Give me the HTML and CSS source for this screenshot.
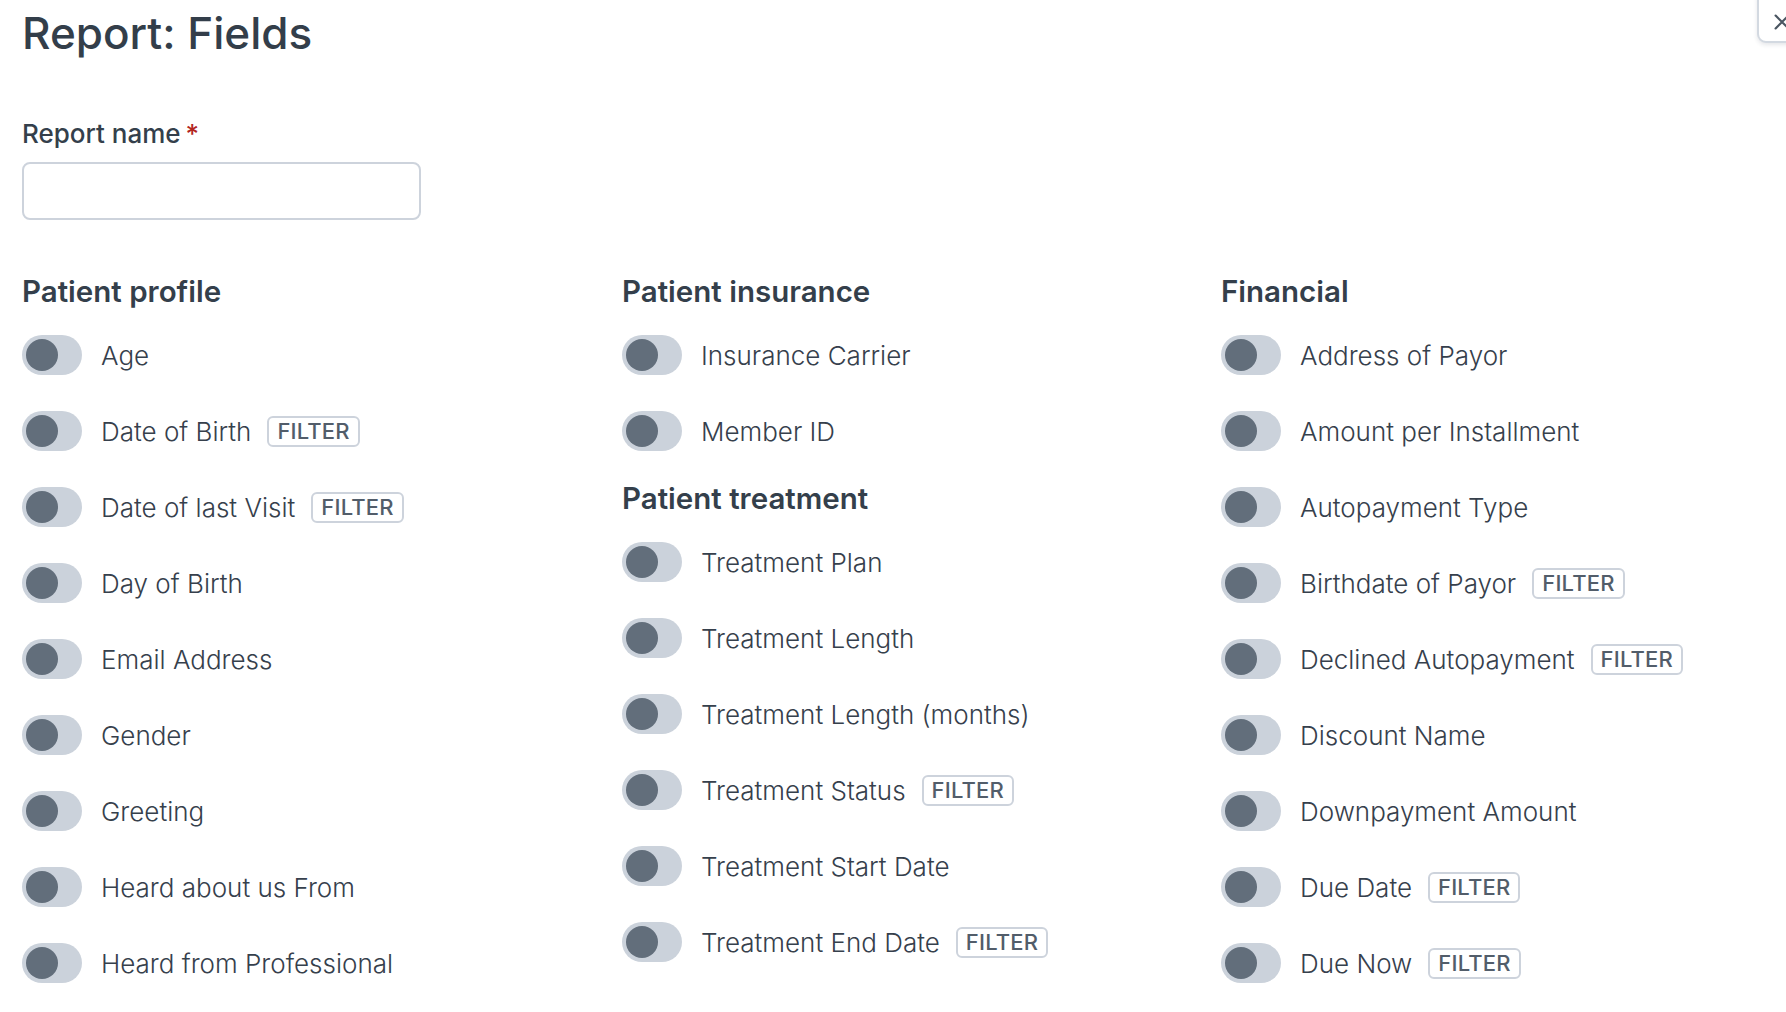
FILE: index.html
```html
<!DOCTYPE html>
<html lang="en">
<head>
<meta charset="utf-8">
<title>Report: Fields</title>
<link rel="stylesheet" href="styles.css">
</head>
<body>
<div class="page">
  <button class="close" aria-label="Close">
    <svg viewBox="0 0 24 24" width="22" height="22"><path d="M5 5 L19 19 M19 5 L5 19" stroke="#4a5561" stroke-width="2.4" stroke-linecap="round" fill="none"/></svg>
  </button>
  <h1 class="title">Report: Fields</h1>
  <div class="field">
    <label class="label">Report name<span class="req">*</span></label>
    <input class="input" type="text">
  </div>
  <div class="columns">
    <div class="col">
      <section class="group">
        <h2 class="group-title">Patient profile</h2>
        <ul class="list">
          <li class="item"><span class="toggle"><span class="knob"></span></span><span class="name">Age</span></li>
          <li class="item"><span class="toggle"><span class="knob"></span></span><span class="name">Date of Birth</span><span class="badge">FILTER</span></li>
          <li class="item"><span class="toggle"><span class="knob"></span></span><span class="name">Date of last Visit</span><span class="badge">FILTER</span></li>
          <li class="item"><span class="toggle"><span class="knob"></span></span><span class="name">Day of Birth</span></li>
          <li class="item"><span class="toggle"><span class="knob"></span></span><span class="name">Email Address</span></li>
          <li class="item"><span class="toggle"><span class="knob"></span></span><span class="name">Gender</span></li>
          <li class="item"><span class="toggle"><span class="knob"></span></span><span class="name">Greeting</span></li>
          <li class="item"><span class="toggle"><span class="knob"></span></span><span class="name">Heard about us From</span></li>
          <li class="item"><span class="toggle"><span class="knob"></span></span><span class="name">Heard from Professional</span></li>
        </ul>
      </section>
    </div>
    <div class="col">
      <section class="group">
        <h2 class="group-title">Patient insurance</h2>
        <ul class="list">
          <li class="item"><span class="toggle"><span class="knob"></span></span><span class="name">Insurance Carrier</span></li>
          <li class="item"><span class="toggle"><span class="knob"></span></span><span class="name">Member ID</span></li>
        </ul>
      </section>
      <section class="group">
        <h2 class="group-title">Patient treatment</h2>
        <ul class="list">
          <li class="item"><span class="toggle"><span class="knob"></span></span><span class="name">Treatment Plan</span></li>
          <li class="item"><span class="toggle"><span class="knob"></span></span><span class="name">Treatment Length</span></li>
          <li class="item"><span class="toggle"><span class="knob"></span></span><span class="name">Treatment Length (months)</span></li>
          <li class="item"><span class="toggle"><span class="knob"></span></span><span class="name">Treatment Status</span><span class="badge">FILTER</span></li>
          <li class="item"><span class="toggle"><span class="knob"></span></span><span class="name">Treatment Start Date</span></li>
          <li class="item"><span class="toggle"><span class="knob"></span></span><span class="name">Treatment End Date</span><span class="badge">FILTER</span></li>
        </ul>
      </section>
    </div>
    <div class="col">
      <section class="group">
        <h2 class="group-title">Financial</h2>
        <ul class="list">
          <li class="item"><span class="toggle"><span class="knob"></span></span><span class="name">Address of Payor</span></li>
          <li class="item"><span class="toggle"><span class="knob"></span></span><span class="name">Amount per Installment</span></li>
          <li class="item"><span class="toggle"><span class="knob"></span></span><span class="name">Autopayment Type</span></li>
          <li class="item"><span class="toggle"><span class="knob"></span></span><span class="name">Birthdate of Payor</span><span class="badge">FILTER</span></li>
          <li class="item"><span class="toggle"><span class="knob"></span></span><span class="name">Declined Autopayment</span><span class="badge">FILTER</span></li>
          <li class="item"><span class="toggle"><span class="knob"></span></span><span class="name">Discount Name</span></li>
          <li class="item"><span class="toggle"><span class="knob"></span></span><span class="name">Downpayment Amount</span></li>
          <li class="item"><span class="toggle"><span class="knob"></span></span><span class="name">Due Date</span><span class="badge">FILTER</span></li>
          <li class="item"><span class="toggle"><span class="knob"></span></span><span class="name">Due Now</span><span class="badge">FILTER</span></li>
        </ul>
      </section>
    </div>
  </div>
</div>
</body>
</html>
```

FILE: styles.css
```css
* { box-sizing: border-box; }
html, body { margin: 0; padding: 0; background: #ffffff; overflow: hidden; }
body {
  font-family: Inter, "Noto Sans", "Liberation Sans", sans-serif;
  color: #343f4b;
}
.page {
  position: relative;
  padding: 8px 22px 0 22px;
  height: 1012px;
}
.close {
  position: absolute;
  top: -10px;
  left: 1757px;
  width: 60px;
  height: 53px;
  border: 2px solid #d3d9e1;
  border-radius: 9px;
  background: #fff;
  box-shadow: 0 2px 4px rgba(40, 50, 70, 0.12);
  padding: 10px 0 0 12px;
  display: flex;
  align-items: center;
}
.title {
  margin: 0;
  font-size: 44px;
  line-height: 50px;
  font-weight: 500;
  color: #333e4a;
}
.field {
  margin-top: 59px;
  display: flex;
  flex-direction: column;
}
.label {
  font-size: 26px;
  line-height: 34px;
  font-weight: 500;
  color: #343f4b;
}
.req { color: #b3261e; margin-left: 5px; }
.input {
  margin-top: 11px;
  width: 399px;
  height: 58px;
  border: 2px solid #cdd3dc;
  border-radius: 8px;
  background: #fff;
}
.columns {
  margin-top: 53px;
  display: grid;
  grid-template-columns: 600px 599px 1fr;
}
.group + .group { margin-top: 29px; }
.group-title {
  margin: 0 0 26px 0;
  font-size: 29.5px;
  line-height: 36px;
  font-weight: 600;
  color: #343f4b;
}
.list {
  list-style: none;
  margin: 0;
  padding: 0;
  display: flex;
  flex-direction: column;
  gap: 36px;
}
.item {
  display: flex;
  align-items: center;
  height: 40px;
}
.toggle {
  width: 60px;
  height: 40px;
  border-radius: 20px;
  background: #cbd2db;
  padding: 4px;
  flex: none;
  display: flex;
  align-items: center;
}
.knob {
  width: 32px;
  height: 32px;
  border-radius: 50%;
  background: #626e7b;
}
.name {
  margin-left: 19px;
  font-size: 26px;
  font-weight: 300;
  color: #36404c;
}
.badge {
  margin-left: 16px;
  height: 31px;
  padding: 0 8px;
  border: 2px solid #cdd3dc;
  border-radius: 6px;
  font-size: 22px;
  font-weight: 500;
  color: #525d6a;
  display: flex;
  align-items: center;
  letter-spacing: 0.2px;
}
```
